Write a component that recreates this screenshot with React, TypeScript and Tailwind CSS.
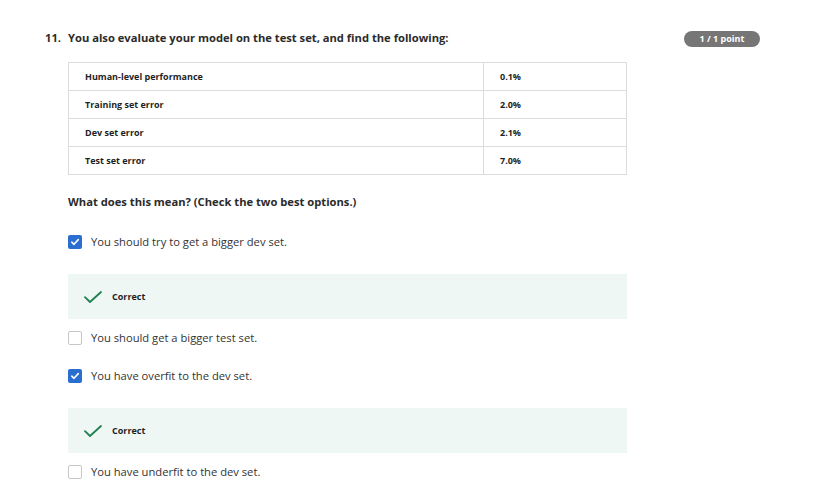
import React from "react";

type Option = {
  label: string;
  checked: boolean;
  correct?: boolean;
};

const rows: [string, string][] = [
  ["Human-level performance", "0.1%"],
  ["Training set error", "2.0%"],
  ["Dev set error", "2.1%"],
  ["Test set error", "7.0%"],
];

const options: Option[] = [
  { label: "You should try to get a bigger dev set.", checked: true, correct: true },
  { label: "You should get a bigger test set.", checked: false },
  { label: "You have overfit to the dev set.", checked: true, correct: true },
  { label: "You have underfit to the dev set.", checked: false },
];

function Checkbox({ checked }: { checked: boolean }) {
  if (checked) {
    return (
      <div className="flex h-[14px] w-[14px] shrink-0 items-center justify-center rounded-[2px] bg-[#2a6fd0]">
        <svg width="10" height="10" viewBox="0 0 10 10" fill="none">
          <path d="M1.8 5.2 L4 7.3 L8.3 2.6" stroke="white" strokeWidth="1.6" strokeLinecap="round" strokeLinejoin="round" />
        </svg>
      </div>
    );
  }
  return <div className="h-[14px] w-[14px] shrink-0 rounded-[2px] border border-[#c7c7c7] bg-white" />;
}

function Feedback() {
  return (
    <div className="mt-px mb-[12px] flex h-[45px] items-center bg-[#eff7f4] pl-[16px]">
      <svg width="18" height="12" viewBox="0 0 18 12" fill="none">
        <path d="M1 6.2 L6 11 L17 1" stroke="#1f8050" strokeWidth="1.8" strokeLinecap="round" strokeLinejoin="round" />
      </svg>
      <span className="ml-[10px] text-[9px] font-bold text-[#1f1f1f]">Correct</span>
    </div>
  );
}

export default function App() {
  return (
    <div className="min-h-[498px] w-[823px] bg-white pt-[29px] pl-[45px] pr-[63px] text-[#1f1f1f] [font-family:'Open_Sans',sans-serif]">
      {/* Question header */}
      <div className="flex items-start justify-between">
        <div className="flex text-[11.2px] font-bold leading-[18px] text-[#2b2b2b]">
          <span className="w-[23px]">11.</span>
          <span>You also evaluate your model on the test set, and find the following:</span>
        </div>
        <div className="mt-[2px] flex h-[16px] w-[76px] items-center justify-center rounded-full bg-[#767676] text-[9px] font-bold text-white">
          1 / 1 point
        </div>
      </div>

      <div className="ml-[23px] w-[559px]">
        {/* Table */}
        <table className="mt-[15px] w-full border-collapse">
          <tbody>
            {rows.map(([name, value]) => (
              <tr key={name} className="h-[28px]">
                <td className="w-[415px] border border-[#dcdcdc] pl-[16px] text-[9px] font-bold text-[#1f1f1f]">{name}</td>
                <td className="border border-[#dcdcdc] pl-[16px] text-[9px] font-bold text-[#1f1f1f]">{value}</td>
              </tr>
            ))}
          </tbody>
        </table>

        <p className="mt-[20px] text-[11.2px] font-bold leading-[14px] text-[#2b2b2b]">
          What does this mean? (Check the two best options.)
        </p>

        {/* Options */}
        <div className="mt-[26px] flex flex-col">
          {options.map((o) => (
            <div key={o.label}>
              <div className="flex h-[14px] items-center">
                <Checkbox checked={o.checked} />
                <span className="ml-[9px] text-[11.2px] text-[#333]">{o.label}</span>
              </div>
              <div className="h-[24px]" />
              {o.correct && <Feedback />}
            </div>
          ))}
        </div>
      </div>
    </div>
  );
}
